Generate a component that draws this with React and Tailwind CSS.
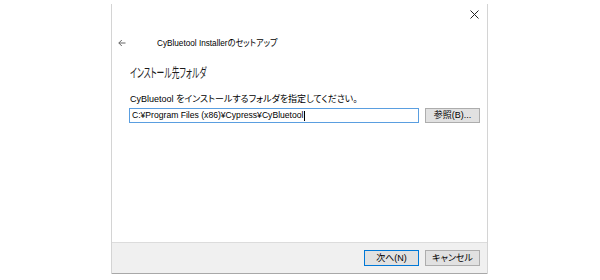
export default function App() {
  const font = { fontFamily: '"Liberation Sans", "Noto Sans CJK JP", sans-serif' };
  return (
    <div className="w-[600px] h-[280px] bg-white overflow-hidden text-black" style={font}>
      <div className="ml-[111px] mt-[4px] w-[377px] h-[270px] border-x border-[#d4d4d4] flex flex-col">
        <div className="flex-1 flex flex-col">
          <div className="h-[24px] flex justify-end items-start pt-[6px] pr-[8px]">
            <svg width="9" height="9" viewBox="0 0 9 9">
              <path d="M0.5 0.5 L8.5 8.5 M8.5 0.5 L0.5 8.5" stroke="#222" strokeWidth="1" fill="none" />
            </svg>
          </div>
          <div className="mt-[5px] h-[20px] flex items-center">
            <svg width="8" height="8" viewBox="0 0 8 8" className="ml-[6px]">
              <path d="M7.5 4 H0.8 M3.8 1 L0.8 4 L3.8 7" stroke="#666" strokeWidth="1" fill="none" />
            </svg>
            <span className="ml-[31px] text-[9px] leading-none whitespace-nowrap origin-left scale-x-[0.91] [font-feature-settings:'palt']">
              CyBluetool Installerのセットアップ
            </span>
          </div>
          <div className="mt-[9px] h-[20px] flex items-center pl-[18px]">
            <span className="text-[13px] leading-none whitespace-nowrap text-[#1a1a1a] origin-left scale-x-[0.6] [font-feature-settings:'palt']">
              インストール先フォルダ
            </span>
          </div>
          <div className="mt-[10px] h-[14px] flex items-center pl-[18px]">
            <span className="text-[9px] leading-none whitespace-nowrap [font-feature-settings:'palt']">
              CyBluetool をインストールするフォルダを指定してください。
            </span>
          </div>
          <div className="mt-[2px] flex items-start pl-[17px] pr-[7px] gap-[6px]">
            <div className="w-[291px] h-[15px] border border-[#5a9ee0] flex items-center pl-[2px] bg-white">
              <span className="text-[8.6px] leading-none whitespace-nowrap">
                C:¥Program Files (x86)¥Cypress¥CyBluetool
              </span>
              <span className="w-px h-[10px] bg-black ml-px" />
            </div>
            <div className="w-[55px] h-[15px] border border-[#adadad] bg-[#e1e1e1] flex items-center justify-center">
              <span className="text-[9px] leading-none whitespace-nowrap [font-feature-settings:'palt']">参照(B)...</span>
            </div>
          </div>
        </div>
        <div className="h-[32px] bg-[#f0f0f0] border-t border-[#dcdcdc] border-b border-b-[#a8a8a8] flex justify-end items-start pt-[7px] pr-[7px] gap-[6px]">
          <div className="w-[55px] h-[16px] border border-[#0078d7] bg-[#e1e1e1] flex items-center justify-center">
            <span className="text-[9px] leading-none whitespace-nowrap [font-feature-settings:'palt']">次へ(N)</span>
          </div>
          <div className="w-[55px] h-[16px] border border-[#adadad] bg-[#e1e1e1] flex items-center justify-center">
            <span className="text-[9px] leading-none whitespace-nowrap [font-feature-settings:'palt']">キャンセル</span>
          </div>
        </div>
      </div>
    </div>
  );
}
